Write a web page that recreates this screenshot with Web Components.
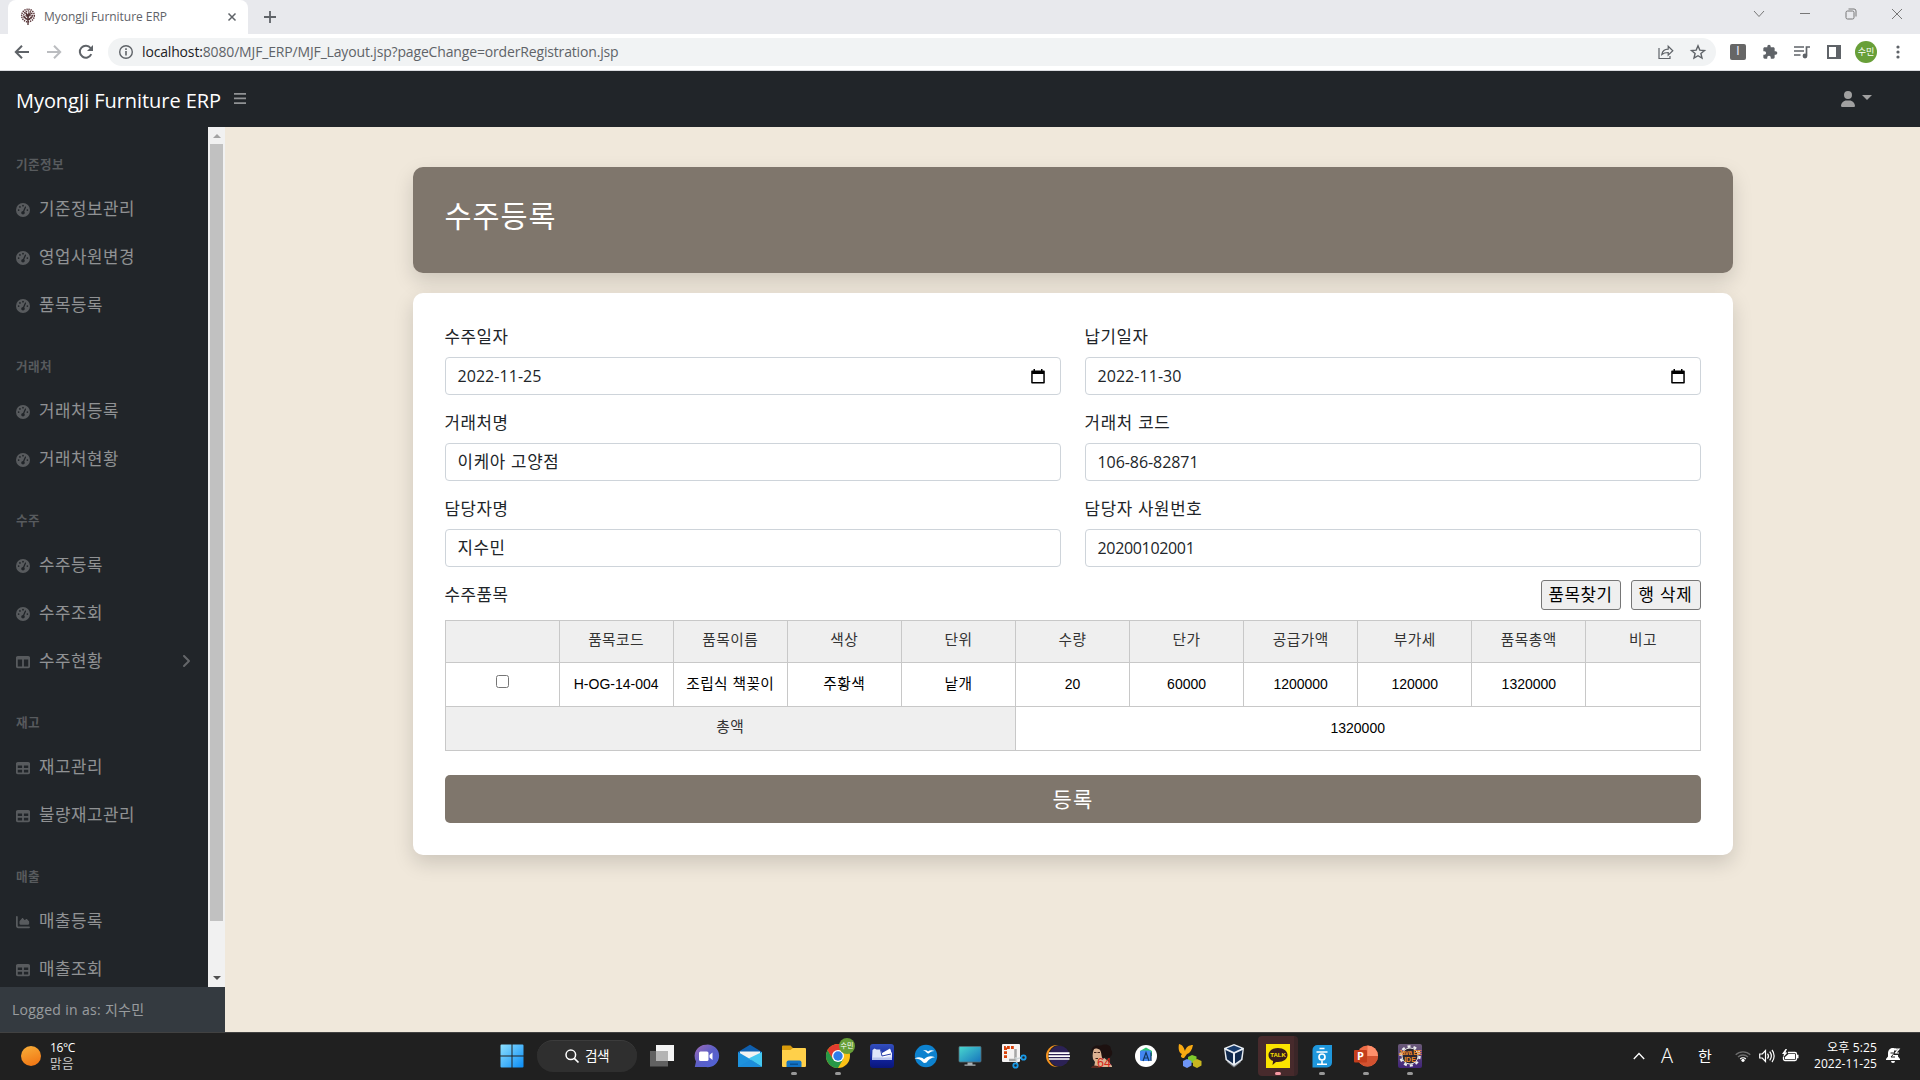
<!DOCTYPE html>
<html lang="ko">
<head>
<meta charset="utf-8">
<title>MyongJi Furniture ERP</title>
<style>
html,body{margin:0;height:1080px;overflow:hidden}
body{font-family:"Open Sans","Noto Sans CJK KR",sans-serif;font-size:16px;line-height:24px;color:#212529}
</style>
</head>
<body>
<erp-desktop></erp-desktop>
<script>
const define=(name,html,setup)=>{
  const t=document.createElement('template');t.innerHTML=html;
  customElements.define(name,class extends HTMLElement{
    constructor(){super();const r=this.attachShadow({mode:'open'});
      r.appendChild(t.content.cloneNode(true));}
    connectedCallback(){if(setup&&!this.ready){this.ready=true;setup(this,this.shadowRoot);}}
  });
};

/* Glyphs, addressed by name */
const G={
 gauge:['0 0 512 512','<path fill-rule="evenodd" d="M0 256a256 256 0 1 1 512 0A256 256 0 1 1 0 256zM288 96a32 32 0 1 0 -64 0 32 32 0 1 0 64 0zM256 416c35.3 0 64-28.7 64-64c0-17.4-6.9-33.1-18.1-44.6L366 161.7c5.3-12.1-.2-26.3-12.3-31.6s-26.3 .2-31.6 12.3L257.9 288c-.6 0-1.3 0-1.9 0c-35.3 0-64 28.7-64 64s28.7 64 64 64zM176 144a32 32 0 1 0 -64 0 32 32 0 1 0 64 0zM96 288a32 32 0 1 0 0-64 32 32 0 1 0 0 64zm352-32a32 32 0 1 0 -64 0 32 32 0 1 0 64 0z"/>'],
 table:['0 0 512 512','<path fill-rule="evenodd" d="M64 256V160H224v96H64zm0 64H224v96H64V320zm224 96V320H448v96H288zM448 256H288V160H448v96zM64 32C28.7 32 0 60.7 0 96V416c0 35.3 28.7 64 64 64H448c35.3 0 64-28.7 64-64V96c0-35.3-28.7-64-64-64H64z"/>'],
 columns:['0 0 512 512','<path fill-rule="evenodd" d="M0 96C0 60.7 28.7 32 64 32H448c35.3 0 64 28.7 64 64V416c0 35.3-28.7 64-64 64H64c-35.3 0-64-28.7-64-64V96zm64 64V416H224V160H64zm384 0H288V416H448V160z"/>'],
 area:['0 0 512 512','<path d="M64 64c0-17.7-14.3-32-32-32S0 46.3 0 64V400c0 44.2 35.8 80 80 80H480c17.7 0 32-14.3 32-32s-14.3-32-32-32H80c-8.8 0-16-7.2-16-16V64zm96 288H448c17.7 0 32-14.3 32-32V251.8c0-7.6-2.7-15-7.7-20.8l-65.8-76.8c-12.1-14.2-33.7-15-46.9-1.8l-21 21c-10 10-26.4 9.2-35.4-1.6l-39.2-47c-12.6-15.1-35.7-15.4-48.7-.6L135.9 215c-5.1 5.8-7.9 13.3-7.9 21.1v84c0 17.7 14.3 32 32 32z"/>'],
 angle:['0 0 320 512','<path d="M278.6 233.4c12.5 12.5 12.5 32.8 0 45.3l-160 160c-12.5 12.5-32.8 12.5-45.3 0s-12.5-32.8 0-45.3L210.7 256 73.4 118.6c-12.5-12.5-12.5-32.8 0-45.3s32.8-12.5 45.3 0l160 160z"/>'],
 user:['0 0 448 512','<path d="M224 256A128 128 0 1 0 224 0a128 128 0 1 0 0 256zm-45.7 48C79.8 304 0 383.8 0 482.3C0 498.7 13.3 512 29.7 512H418.3c16.4 0 29.7-13.3 29.7-29.7C448 383.8 368.2 304 269.7 304H178.3z"/>'],
 bars:['0 0 12 11','<path d="M0 0h12v1.7H0zM0 4.6h12v1.7H0zM0 9.2h12v1.7H0z"/>'],
 tree:['0 0 16 16','<path d="M8 16V5M8 11L3.5 7.500M8 11l4.500-3.500M8 8L5.500 3.500M8 8l2.500-4.500" stroke="#4a2f2f" stroke-width="1.300" fill="none"/><g fill="none" stroke="#5a3438" stroke-width="1.500" stroke-dasharray="1.300 .8"><circle cx="8" cy="6.500" r="6.300"/><circle cx="8" cy="6.200" r="4.200"/><circle cx="8" cy="6" r="2"/></g>'],
 x:['0 0 10 10','<path d="M1.500 1.500l7 7M8.500 1.500l-7 7" stroke="currentColor" stroke-width="1.500"/>'],
 wx:['0 0 12 12','<path d="M1 1l10 10M11 1L1 11" stroke="currentColor" stroke-width="1"/>'],
 plus:['0 0 12 12','<path d="M6 0v12M0 6h12" stroke="currentColor" stroke-width="1.800"/>'],
 back:['0 0 16 16','<path d="M15 8H2.500M8 1.800L1.800 8 8 14.200" fill="none" stroke="currentColor" stroke-width="2"/>'],
 fwd:['0 0 16 16','<path d="M1 8h12.500M8 1.800L14.200 8 8 14.200" fill="none" stroke="currentColor" stroke-width="2"/>'],
 reload:['0 0 16 16','<path d="M13.300 10.200A6 6 0 1 1 12.600 4" fill="none" stroke="currentColor" stroke-width="2"/><path d="M15 1v6H9z"/>'],
 info:['0 0 16 16','<circle cx="8" cy="8" r="6.300" fill="none" stroke="currentColor" stroke-width="1.400"/><path d="M7.200 7h1.600v4.500H7.200zM7.200 4.300h1.600v1.600H7.200z"/>'],
 share:['0 0 16 16','<path d="M1 4v10.500h11V12M3.800 10.500c.6-3.500 3-5.200 6.400-5.300V2.300L14.800 6.800l-4.600 4.400V8.500c-3 0-4.700.5-6.400 2z" fill="none" stroke="currentColor" stroke-width="1.200"/>'],
 star:['0 0 16 16','<path d="M8 1.800l1.800 4.300 4.700.4-3.600 3 1.100 4.600L8 11.700 4 14.100l1.100-4.600-3.600-3 4.700-.4z" fill="none" stroke="currentColor" stroke-width="1.400"/>'],
 puzzle:['0 0 24 24','<path d="M20.500 11H19V7c0-1.100-.9-2-2-2h-4V3.500a2.500 2.500 0 0 0-5 0V5H4c-1.100 0-2 .9-2 2v3.800h1.500a2.700 2.700 0 0 1 0 5.400H2V20c0 1.100.9 2 2 2h3.800v-1.500a2.700 2.700 0 0 1 5.400 0V22H17c1.100 0 2-.9 2-2v-4h1.500a2.500 2.500 0 0 0 0-5z"/>'],
 music:['0 0 16 13','<path d="M0 1h10M0 5h10M0 9h6.500M12.500 9.500V1H16" fill="none" stroke="currentColor" stroke-width="1.700"/><circle cx="11" cy="10" r="2.400"/>'],
 side:['0 0 14 14','<path fill-rule="evenodd" d="M0 0h14v14H0zM2 2v10h7V2z"/>'],
 dots:['0 0 4 14','<circle cx="2" cy="2" r="1.600"/><circle cx="2" cy="7" r="1.600"/><circle cx="2" cy="12" r="1.600"/>'],
 chev:['0 0 12 8','<path d="M1 1l5 5.500L11 1" fill="none" stroke="currentColor"/>'],
 minus:['0 0 10 2','<path d="M0 0h10v1H0z"/>'],
 restore:['0 0 12 12','<g fill="none" stroke="currentColor"><rect x="1" y="3" width="8" height="8" rx="1.500"/><path d="M3.500 1H9a2 2 0 0 1 2 2v5.500"/></g>'],
 cal:['0 0 14 15','<path fill-rule="evenodd" d="M2.500 0h1.500v1.500h6V0h1.500v1.500H13a.8.8 0 0 1 .8.800v11.400a.8.8 0 0 1-.8.800H1a.8.8 0 0 1-.8-.8V2.300a.8.8 0 0 1 .8-.8h1.500zM1.700 5v8h10.600V5z"/>'],
 win:['0 0 24 24','<defs><linearGradient id="a" x2="1" y2="1"><stop stop-color="#8ee0ff"/><stop offset="1" stop-color="#0a8cf5"/></linearGradient></defs><path fill="url(#a)" d="M.5 1.500a1 1 0 0 1 1-1H11.500V11.500H.5zM12.500.5h10a1 1 0 0 1 1 1v10h-11zM.5 12.500h11v11h-10a1 1 0 0 1-1-1zM12.500 12.500h11v10a1 1 0 0 1-1 1h-10z"/>'],
 search:['0 0 14 14','<circle cx="5.800" cy="5.800" r="4.800" fill="none" stroke="currentColor" stroke-width="1.500"/><path d="M9.300 9.300l4.200 4.200" stroke="currentColor" stroke-width="1.700"/>'],
 task:['0 0 24 24','<path fill="#f4f4f4" d="M6 1h18v16H6z"/><path fill="#6a6a6a" d="M0 7h18v15.500H0z" opacity=".88"/><path fill="#b4b4b4" d="M6 7h12v10H6z"/>'],
 chat:['0 0 24 24','<defs><linearGradient id="a" x2="1" y2="1"><stop stop-color="#a06ab4"/><stop offset=".5" stop-color="#5b5fc7"/><stop offset="1" stop-color="#4f63d8"/></linearGradient></defs><path fill="url(#a)" d="M12 .7A11.300 11.300 0 1 1 12 23H.8L2 17.500A11.300 11.300 0 0 1 12 .7z"/><rect x="5" y="7.500" width="9.500" height="9.500" rx="1.500" fill="#fff"/><path fill="#fff" d="M15.500 11l3-2.500v7.500l-3-2.500z"/>'],
 mail:['0 0 24 24','<path fill="#0f5fae" d="M0 8L12 .7 24 8v4H0z"/><path fill="#f3f3f3" d="M2 7.500h20v6L12 17 2 13z"/><path fill="#1e92dd" d="M0 8l12 7 12 8H0z"/><path fill="#45c8f1" d="M24 8v15L10.500 14.500z"/><path fill="#1a86d8" opacity=".5" d="M0 23l13-7.500L24 23z"/>'],
 folder:['0 0 24 24','<path fill="#d99b0b" d="M0 2.500a1 1 0 0 1 1-1h7.500l2.500 2.500V9H0z"/><path fill="#ffd04a" d="M0 6h8.500L11 4h12a1 1 0 0 1 1 1v17a1 1 0 0 1-1 1H1a1 1 0 0 1-1-1z"/><path fill="#1273c4" d="M4.500 23v-4.500a2 2 0 0 1 2-2H17.500a2 2 0 0 1 2 2V23z"/><path fill="#0b4f8c" d="M8 19.500h8v1.400H8z"/>'],
 chrome:['0 0 24 24','<circle cx="12" cy="12" r="12" fill="#fbc116"/><path fill="#e33b2e" d="M1.600 6A12 12 0 0 1 22.400 6H12L6.800 15z"/><path fill="#279847" d="M1.600 6A12 12 0 0 0 12 24l5.200-9-10.400 0z"/><path fill="#e33b2e" d="M1.600 6H12v6H5.100z"/><circle cx="12" cy="12" r="6" fill="#fff"/><circle cx="12" cy="12" r="4.700" fill="#2f7de9"/>'],
 scan:['0 0 24 24','<defs><linearGradient id="a" x2="0" y2="1"><stop stop-color="#334fbd"/><stop offset=".65" stop-color="#10229a"/><stop offset="1" stop-color="#0a167a"/></linearGradient></defs><rect width="24" height="24" rx="3" fill="url(#a)"/><path fill="#dfe6fa" d="M2.500 6l2-1.500 2 1h4l1.500 3.500 8-4.500 2 5.500v5.500H2z"/><path fill="#fff" d="M11 10l9-5 2 5.500-9 3.500z"/><path stroke="#243aa9" d="M10.500 5.500l1.500 6.500 9-2" fill="none"/><path fill="#b8c4ec" d="M2 13.500h20V16H2z"/>'],
 bird:['0 0 24 24','<circle cx="12" cy="12" r="11.200" fill="#0d82cf"/><path fill="#fff" d="M.5 14.500c4-2 7-1.500 9.500.7 3-3 7-4 11-2-4 .5-6.500 2.300-8.500 5.300-1.500.7-3 .5-4-.8C6.500 15.500 4 14.500.5 14.500zM9 6.500c2.300-.7 4-.2 5 .9 1.700-1.400 4-1.700 6.500-.5-2.700.1-4.500 1-5.500 2.400-.8.4-1.600.2-2.200-.5C12 7.500 10.500 6.600 9 6.500z"/>'],
 pc:['0 0 24 24','<defs><linearGradient id="a" x2="1" y2="1"><stop stop-color="#49d8ce"/><stop offset="1" stop-color="#1673bd"/></linearGradient></defs><rect x="1" y="2.500" width="22" height="15.500" rx="1" fill="url(#a)" stroke="#58717a" stroke-width=".8"/><path fill="#a8b0b4" d="M9.500 18.500h5v2h3v1.300H6.500v-1.300h3z"/>'],
 snip:['0 0 24 24','<rect width="18" height="18" rx="1" fill="#f5f3f3"/><path d="M3.500 14V3.500H13" stroke="#d9420b" stroke-width="3" stroke-dasharray="2.800 1.200" fill="none"/><path d="M13.500 5v9.500M7 16h8" stroke="#a7a7a7" stroke-width="2.500"/><path d="M14 15l8-2M14 13l1 8" stroke="#cfd5d8" stroke-width="1.500"/><g fill="#222" stroke="#189ae8" stroke-width="1.800"><circle cx="21.500" cy="13.500" r="2.200"/><circle cx="13.500" cy="21.500" r="2.200"/></g>'],
 eclipse:['0 0 24 24','<circle cx="11" cy="12" r="11" fill="#f7941e"/><circle cx="13.300" cy="12" r="11" fill="#202020"/><circle cx="13.300" cy="12" r="10.300" fill="#2c2255"/><path fill="#fff" d="M3 8.300h20.500v1.800H2.700zM2.500 11.300H24v1.700H2.500zM2.700 14.200h20.800v1.600H3z"/>'],
 face:['0 0 24 24','<path fill="#dcb393" d="M5 3c3-1 6 0 7 3l1 7 5 4 4 5v1H4l1-5-2-3c-1-4 0-9 2-12z"/><path fill="#1d1110" d="M1.500 8C1 3 5 1 8.500 1.500 10 2 12 1 14 .5c5-.5 7 2 7 5 2 3 1.500 6-1 7.500-2 1.500-4 .5-5 0l-2 2c-2-2-1-6-3-9C8 4.500 5 4 3.500 5.500z"/><path fill="#5d2a20" d="M1 24c1-3 4-3 7-2l3 2z"/><path fill="#42231a" d="M4 8h2.500v1H4zM7.500 8H10v1H7.500zM5.500 14H8v1H5.500z"/><text x="7" y="22.500" font-size="12.500" fill="#d4281c" font-family="Liberation Sans">64</text>'],
 studio:['0 0 24 24','<circle cx="12" cy="12" r="11" fill="#fff"/><path fill="#31c873" d="M6 7l6-3.500 6 3.500v5H6z"/><rect x="6" y="6.500" width="11" height="10.500" rx="1.500" fill="#4388f2"/><path d="M9 17l3-8.500L15 17M10.300 14h3.600M17 8.500V17" stroke="#123862" stroke-width="1.200" fill="none"/>'],
 wings:['0 0 24 24','<path fill="#f8a912" d="M1 0c4 1 5 4 6 7 1-4 4-6 8-6-1 5-3 8-6 9l-3 4C3 14 2 12 4 10 1 9 0 5 1 0z"/><path fill="#7fca2c" d="M14 11l4.500 1.500v4.500L14 19l-4-2v-4z"/><path fill="#6e95f5" d="M9 15l4.500 2v4.500L9 24l-4-2v-5z"/><path fill="#c8b620" d="M19 15l4.500 2v4.500L19 24l-4-2v-5z"/>'],
 box:['0 0 24 24','<path fill="#80878d" d="M5 18l7 5.500 7-5.500-2-3H7z"/><path fill="#e8edf3" d="M12 0l10 4-1.500 12L12 22 3.500 16 2 4z"/><path fill="#183b6b" d="M12 1.500l7.500 3L12 8 4.500 4.500z"/><path fill="#11294c" d="M3.500 6l7.500 3.500v10L5 15.300zM20.500 6L13 9.500v10l6-4.200z"/>'],
 talk:['0 0 24 24','<rect width="24" height="24" fill="#fbe300"/><path fill="#371c1d" d="M12 4c5.500 0 9.500 3 9.500 7s-4 7-9.500 7c-.7 0-1.300 0-2-.1L6.500 21l.6-4C4.200 16 2.500 13.700 2.500 11c0-4 4-7 9.500-7z"/><text x="12" y="13.300" text-anchor="middle" font-size="6" font-weight="700" fill="#fbe300" font-family="Liberation Sans">TALK</text>'],
 hwp:['0 0 24 24','<path fill="#1f97dc" d="M2.500 6a5 5 0 0 1 5-5H22v17.500a5 5 0 0 1-5 5H2.500z"/><path d="M9.500 4.500h5M6.500 8h11M12 16.500V20M7 20.300h10" stroke="#fff" stroke-width="1.600"/><circle cx="12" cy="13" r="3" fill="none" stroke="#fff" stroke-width="1.700"/>'],
 ppt:['0 0 24 24','<circle cx="13.500" cy="12" r="10.500" fill="#ed6c47"/><path fill="#ff8f6b" d="M13.500 1.500A10.500 10.500 0 0 1 24 12H13.500z"/><path fill="#d35230" d="M3 12h21a10.500 10.500 0 0 1-21 0z"/><rect y="6" width="13" height="12.500" rx="1" fill="#c43e1c"/><text x="6.500" y="16.200" text-anchor="middle" font-size="11" font-weight="700" fill="#fff" font-family="Open Sans">P</text>'],
 jee:['0 0 24 24','<defs><linearGradient id="a" x2="0" y2="1"><stop stop-color="#6b5a78"/><stop offset="1" stop-color="#41247a"/></linearGradient></defs><rect width="24" height="24" rx="2" fill="url(#a)"/><circle cx="12" cy="12" r="9.500" fill="none" stroke="#ececec" stroke-width="2.500" stroke-dasharray="3 3"/><circle cx="12" cy="12" r="8" fill="#2b2430" stroke="#ddd"/><text x="12" y="11" text-anchor="middle" font-size="6.500" font-weight="700" fill="#f08a28" textLength="23" font-family="Liberation Sans">Java EE</text><text x="12" y="17.500" text-anchor="middle" font-size="7" font-weight="700" fill="#f08a28" font-family="Liberation Sans">IDE</text>'],
 up:['0 0 12 8','<path d="M.8 7L6 1.500 11.200 7" fill="none" stroke="currentColor" stroke-width="1.300"/>'],
 wifi:['0 0 16 12','<g fill="none" stroke="currentColor" stroke-width="1.300"><path opacity=".35" d="M.7 4.800a10.500 10.500 0 0 1 14.600 0M3 7a7.300 7.300 0 0 1 10 0"/><path d="M5.200 9a4 4 0 0 1 5.600 0"/></g><circle cx="8" cy="10.300" r="1.600"/>'],
 sound:['0 0 16 14','<g fill="none" stroke="currentColor" stroke-width="1.200"><path d="M.7 5h2.600L6.500 1.500v11L3.300 9H.7z"/><path d="M8.500 4.500a4 4 0 0 1 0 5M10.700 2.700a7 7 0 0 1 0 8.600M13 1a9.500 9.500 0 0 1 0 12"/></g>'],
 batt:['0 0 17 13','<path d="M6 3.500h7a1.500 1.500 0 0 1 1.500 1.500v5a1.500 1.500 0 0 1-1.500 1.500H3A1.500 1.500 0 0 1 1.500 10V8" fill="none" stroke="currentColor" stroke-width="1.300"/><path d="M6.500 5h6.500v5H3V8zM15 5.800h1.500v3.400H15zM3.500 0L0 5h2L1 8.500 5.500 3.500H3.500L5 0z"/>'],
 bell:['0 0 14 15','<path d="M7 0C3.500 0 2 2.500 2 5.500v3L0 11v1h14v-1l-2-2.500V7H8V2.500h3V1.500A5 5 0 0 0 7 0zM5 13h4a2 2 0 0 1-4 0z"/><path d="M9 1h4L9.500 5H13" fill="none" stroke="currentColor" stroke-width="1.200"/><path d="M4.500 5h4l-3.500 4h4" fill="none" stroke="#202020"/>']
};
define('ui-icon','<style>:host{display:inline-flex;flex:none}svg{display:block;overflow:visible}</style><svg fill="currentColor"></svg>',(h,r)=>{
  const s=r.querySelector('svg'),[v,m]=G[h.getAttribute('name')];
  s.setAttribute('viewBox',v);s.setAttribute('width',h.getAttribute('w')||16);s.setAttribute('height',h.getAttribute('h')||h.getAttribute('w')||16);s.innerHTML=m;
});

/* Browser chrome */
define('browser-bar',`<style>
:host{display:flex;flex-direction:column;height:71px;flex:none;color:#5f6368}
.tabs{display:flex;height:34px;background:#e8e9ed;padding-left:8px}
.tab{display:flex;align-items:center;box-sizing:border-box;width:240px;height:34px;background:#fff;border-radius:8px 8px 0 0;padding:0 11px 0 12px;font-size:12px}
.tab fit-text{margin-left:8px}.tab ui-icon:last-child{margin-left:auto}
.new{margin:11px 0 0 16px}
.win{display:flex;margin-left:auto;padding-right:17px;height:28px;align-items:center;color:#777}
.win ui-icon{width:12px;justify-content:center;margin-left:34px}
.tools{display:flex;align-items:center;height:36px;background:#fff;border-bottom:1px solid #dadce0}
.nav{display:flex;gap:16px;padding:0 14px}
.url{display:flex;align-items:center;width:1608px;height:28px;border-radius:14px;background:#f1f3f4;font-size:14px;box-sizing:border-box;padding:0 10px}
.url fit-text{margin-left:8px}b{font-weight:400;color:#202124}
.r{display:flex;gap:16px;margin-left:auto}
.ext{display:flex;align-items:center;margin-left:14px}
.i{width:16px;height:16px;border-radius:2px;background:#666;color:#e8e8ff;text-align:center;font:12px/15px "Liberation Sans"}
.av{width:22px;height:22px;border-radius:50%;background:#689f38;color:#fff;font-size:9px;line-height:21px;text-align:center}
</style>
<div class="tabs"><div class="tab"><ui-icon name="tree"></ui-icon><fit-text w="123">MyongJi Furniture ERP</fit-text><ui-icon name="x" w="10"></ui-icon></div><ui-icon class="new" name="plus" w="12"></ui-icon>
<div class="win"><ui-icon name="chev" w="12" h="8"></ui-icon><ui-icon name="minus" w="10" h="2"></ui-icon><ui-icon name="restore" w="12"></ui-icon><ui-icon name="wx" w="12"></ui-icon></div></div>
<div class="tools"><div class="nav"><ui-icon name="back"></ui-icon><ui-icon name="fwd" style="color:#bbbdc0"></ui-icon><ui-icon name="reload"></ui-icon></div>
<div class="url"><ui-icon name="info"></ui-icon><fit-text w="476.500"><b>localhost:</b>8080/MJF_ERP/MJF_Layout.jsp?pageChange=orderRegistration.jsp</fit-text><div class="r"><ui-icon name="share"></ui-icon><ui-icon name="star"></ui-icon></div></div>
<div class="ext"><div class="i">I</div><ui-icon name="puzzle" w="16" style="margin-left:16px"></ui-icon><ui-icon name="music" w="16" h="13" style="margin-left:16px"></ui-icon><ui-icon name="side" w="14" style="margin-left:17px"></ui-icon><div class="av" style="margin-left:14px">수민</div><ui-icon name="dots" w="4" h="14" style="margin-left:19px"></ui-icon></div></div>`);

/* ERP top bar */
define('erp-navbar',`<style>
:host{display:flex;align-items:center;height:56px;flex:none;background:#212529;color:#fff;padding:0 48px 0 16px;box-sizing:border-box}
fit-text{font-size:20px;line-height:30px;margin-top:3px}
.m{margin:0 0 2px 13px;color:#909294}.u{margin-left:auto;color:#a0a0a0;display:flex;align-items:center;gap:7px}
i{border:5px solid transparent;border-top-color:currentColor;border-bottom:0;margin-bottom:3px}
</style><fit-text w="205">MyongJi Furniture ERP</fit-text><ui-icon class="m" name="bars" w="12" h="11"></ui-icon><div class="u"><ui-icon name="user" w="14" h="16"></ui-icon><i></i></div>`);

/* Side navigation */
define('nav-head','<style>:host{display:block;padding:29px 16px 11px;font-size:12px;line-height:18px;height:18px;font-weight:700;color:rgba(255,255,255,.25)}</style><slot></slot>');
define('nav-item','<style>:host{display:flex;align-items:center;height:48px;padding:0 16px;color:rgba(255,255,255,.5)}.i{color:rgba(255,255,255,.25);margin:2px 9px 0 0}.a{margin-left:auto;color:rgba(255,255,255,.3);margin-right:1px}</style><slot></slot>',(h,r)=>{
  const icon=(cls,name,w,hh)=>{const e=document.createElement('ui-icon');e.className=cls;e.setAttribute('name',name);e.setAttribute('w',w);e.setAttribute('h',hh);return e;};
  r.insertBefore(icon('i',h.getAttribute('icon'),14,14),r.querySelector('slot'));
  if(h.hasAttribute('more'))r.appendChild(icon('a','angle',10,16));
});
const menu=[['기준정보',['gauge','기준정보관리'],['gauge','영업사원변경'],['gauge','품목등록']],['거래처',['gauge','거래처등록'],['gauge','거래처현황']],['수주',['gauge','수주등록'],['gauge','수주조회'],['columns','수주현황','more']],['재고',['table','재고관리'],['table','불량재고관리']],['매출',['area','매출등록'],['table','매출조회']]];
define('erp-sidebar',`<style>
:host{display:flex;flex-direction:column;width:225px;flex:none;background:#212529}
.body{display:flex;height:860px;overflow:hidden}
nav{width:208px}
.sb{display:flex;flex-direction:column;align-items:center;width:17px;background:#f1f1f1}
.sb i{border:4px solid transparent}.u{border-top:0!important;border-bottom-color:#a3a3a3!important;margin:7px 0 6px}.d{border-bottom:0!important;border-top-color:#505050!important;margin:auto 0 7px}
.th{width:13px;height:777px;background:#c1c1c1}
.foot{display:flex;align-items:center;height:45px;background:#343a40;padding-left:12px;font-size:14px;color:rgba(255,255,255,.5)}
</style><div class="body"><nav>${menu.map(([t,...xs])=>`<nav-head><fit-text w="${t.length*12}">${t}</fit-text></nav-head>`+xs.map(([i,s,m])=>`<nav-item icon="${i}" ${m||''}><fit-text w="${s.length*16}">${s}</fit-text></nav-item>`).join('')).join('')}</nav>
<div class="sb"><i class="u"></i><div class="th"></div><i class="d"></i></div></div>
<div class="foot"><fit-text w="132.500">Logged in as: 지수민</fit-text></div>`);

/* Form pieces */
define('form-field',`<style>:host{display:block;height:70px;margin-bottom:16px}
.l{height:24px;margin-bottom:8px}.v{display:flex;align-items:center;justify-content:space-between;height:38px;box-sizing:border-box;border:1px solid #ced4da;border-radius:4px;padding:0 15px 0 12px;background:#fff}ui-icon{color:#000}</style>
<div class="l"><slot name="label"></slot></div><div class="v"><slot></slot></div>`,(h,r)=>{
  if(h.hasAttribute('date')){const i=document.createElement('ui-icon');i.setAttribute('name','cal');i.setAttribute('w','14');i.setAttribute('h','15');r.querySelector('.v').appendChild(i);}
});
define('plain-button','<style>:host{display:flex;align-items:center;justify-content:center;box-sizing:border-box;height:30px;border:1px solid #767676;border-radius:3px;background:#efefef;color:#000;padding-bottom:1px}</style><slot></slot>');
define('order-table',`<style>
:host{display:block;font:14px/20px "Liberation Sans","Noto Sans CJK KR",sans-serif;color:#000}
.t{display:grid;grid-template-columns:repeat(11,1fr);grid-template-rows:42px 44px 44px;border:solid #c8c8c8;border-width:1px 0 0 1px;box-sizing:border-box;height:131px}
.t>div{display:flex;align-items:center;justify-content:center;border:solid #c8c8c8;border-width:0 1px 1px 0;min-width:0;box-sizing:border-box;padding-bottom:2px}
.t>.h{background:#efefef;color:#333;padding-bottom:3px}
i{width:11px;height:11px;border:1px solid #767676;border-radius:2.500px;margin-bottom:4px;background:#fff}
</style><div class="t"><div class="h"></div>${['품목코드','품목이름','색상','단위','수량','단가','공급가액','부가세','품목총액','비고'].map(s=>`<div class="h"><fit-text w="${s.length*14}">${s}</fit-text></div>`).join('')}
<div><i></i></div><div>H-OG-14-004</div><div><fit-text w="88">조립식 책꽂이</fit-text></div><div><fit-text w="42">주황색</fit-text></div><div><fit-text w="28">낱개</fit-text></div><div>20</div><div>60000</div><div>1200000</div><div>120000</div><div>1320000</div><div></div>
<div class="h" style="grid-column:span 5;padding-bottom:4px"><fit-text w="28">총액</fit-text></div><div style="grid-column:span 6">1320000</div></div>`);
const f=(l,lw,v,vw,d='')=>`<form-field ${d}><fit-text slot="label" w="${lw}">${l}</fit-text><fit-text w="${vw}">${v}</fit-text></form-field>`;
define('order-page',`<style>
:host{display:flex;flex-direction:column;align-items:center;flex:1;background:#f0e8db;padding-top:40px;box-sizing:border-box;gap:20px}
section{width:1320px;box-sizing:border-box;border-radius:10px;box-shadow:0 8px 20px rgba(0,0,0,.15);padding:32px}
.hd{background:#7f766c;height:106px;color:#fff;font-size:28px;line-height:34px}
.bd{background:#fff;height:562px}
.g{display:grid;grid-template-columns:1fr 1fr;column-gap:24px}
.row{display:flex;gap:10px;height:30px;margin:-3px 0 10px;align-items:center}.row>:first-child{margin-right:auto}
.go{display:flex;align-items:center;justify-content:center;height:48px;box-sizing:border-box;padding:1px 0 0 1px;margin-top:24px;border-radius:5px;background:#7f766c;color:#fff;font-size:20px}
</style>
<section class="hd"><fit-text w="112">수주등록</fit-text></section>
<section class="bd"><div class="g">${f('수주일자',64,'2022-11-25',84,'date')}${f('납기일자',64,'2022-11-30',84,'date')}${f('거래처명',64,'이케아 고양점',102)}${f('거래처 코드',86,'106-86-82871',101)}${f('담당자명',64,'지수민',48)}${f('담당자 사원번호',118,'20200102001',97)}</div>
<div class="row"><fit-text w="64">수주품목</fit-text><plain-button style="width:80px"><fit-text w="64">품목찾기</fit-text></plain-button><plain-button style="width:70px"><fit-text w="54">행 삭제</fit-text></plain-button></div>
<order-table></order-table><div class="go"><fit-text w="41">등록</fit-text></div></section>`);

/* Task bar */
define('task-app','<style>:host{display:flex;position:relative;align-items:center;justify-content:center;width:44px;height:47px}.run{position:absolute;left:19px;top:40px;width:6px;height:3px;border-radius:2px;background:#989898}.badge{position:absolute;left:23px;top:6px;width:16px;height:16px;border-radius:50%;background:#689f38;color:#fff;font-size:7px;line-height:15px;text-align:center}.hot{position:absolute;left:2px;top:4px;width:40px;height:40px;border-radius:4px;background:#472a2c;box-sizing:border-box;border-right:4px solid #3b2628}ui-icon{position:relative}</style>',(h,r)=>{
  const add=(c,t='')=>{const e=document.createElement('div');e.className=c;e.textContent=t;r.appendChild(e);return e};
  if(h.hasAttribute('hot'))add('hot');
  const i=document.createElement('ui-icon');i.setAttribute('name',h.getAttribute('icon'));i.setAttribute('w','24');r.appendChild(i);
  if(h.hasAttribute('run')){const d=add('run');if(h.hasAttribute('hot'))d.style.background='#f79aa4';}
  if(h.hasAttribute('badge'))add('badge',h.getAttribute('badge'));
});
define('task-bar',`<style>
:host{display:flex;height:48px;box-sizing:border-box;flex:none;background:#202020;border-top:1px solid #414141;color:#fff;align-items:center;font-size:12px;line-height:16px;padding-bottom:2px}
.w{display:flex;align-items:center;width:490px;padding-left:21px;box-sizing:border-box}.sun{width:20px;height:20px;border-radius:50%;background:linear-gradient(160deg,#f8b03a,#f07010);margin-right:9px}
.w p{margin:0;display:flex;flex-direction:column}.w p :last-child{color:#ccc}
.s{display:flex;align-items:center;justify-content:center;gap:6px;width:100px;height:32px;border-radius:16px;background:#2f2f2f;border-top:1px solid #3c3c3c;box-sizing:border-box;margin:0 3px;font-size:13px}
.tray{display:flex;align-items:center;margin-left:auto;padding-right:20px}
.clock{display:flex;flex-direction:column;align-items:flex-end;margin:0 9px 0 15px}
</style>
<div class="w"><div class="sun"></div><p><fit-text w="25">16°C</fit-text><fit-text w="24">맑음</fit-text></p></div>
<task-app icon="win"></task-app><div class="s"><ui-icon name="search" w="14"></ui-icon><fit-text w="24">검색</fit-text></div>
<task-app icon="task"></task-app><task-app icon="chat"></task-app><task-app icon="mail"></task-app><task-app icon="folder" run></task-app><task-app icon="chrome" run badge="수민"></task-app><task-app icon="scan"></task-app><task-app icon="bird"></task-app><task-app icon="pc"></task-app><task-app icon="snip"></task-app><task-app icon="eclipse"></task-app><task-app icon="face"></task-app><task-app icon="studio"></task-app><task-app icon="wings"></task-app><task-app icon="box"></task-app><task-app icon="talk" hot run></task-app><task-app icon="hwp" run></task-app><task-app icon="ppt" run></task-app><task-app icon="jee" run></task-app>
<div class="tray"><ui-icon name="up" w="12" h="8"></ui-icon><span style="font:300 20px/24px 'Open Sans';width:14px;margin-left:15px;text-align:center">A</span><span style="font-size:15px;width:16px;margin-left:24px">한</span><ui-icon name="wifi" w="16" h="12" style="margin-left:21px"></ui-icon><ui-icon name="sound" w="16" h="14" style="margin-left:8px"></ui-icon><ui-icon name="batt" w="17" h="13" style="margin-left:7px"></ui-icon>
<div class="clock"><fit-text w="50">오후 5:25</fit-text><fit-text w="63">2022-11-25</fit-text></div><ui-icon name="bell" w="14" h="15"></ui-icon></div>`);

define('erp-desktop',`<style>:host{display:flex;flex-direction:column;width:1920px;height:1080px}main{display:flex;height:905px}</style>
<browser-bar></browser-bar><erp-navbar></erp-navbar><main><erp-sidebar></erp-sidebar><order-page></order-page></main><task-bar></task-bar>`);

/* Label tracked out to a given advance width; pure Hangul labels are drawn slightly larger */
define('fit-text','<style>:host{display:inline-block;white-space:nowrap}</style><span><slot></slot></span>',(h,r)=>{
  const s=r.querySelector('span'),n=h.textContent.length,w=+h.getAttribute('w');
  if(/^[\uac00-\ud7a3 ]+$/.test(h.textContent))s.style.fontSize='1.05em';
  s.style.letterSpacing=(w-s.getBoundingClientRect().width)/n+'px';
});
</script>
</body>
</html>
